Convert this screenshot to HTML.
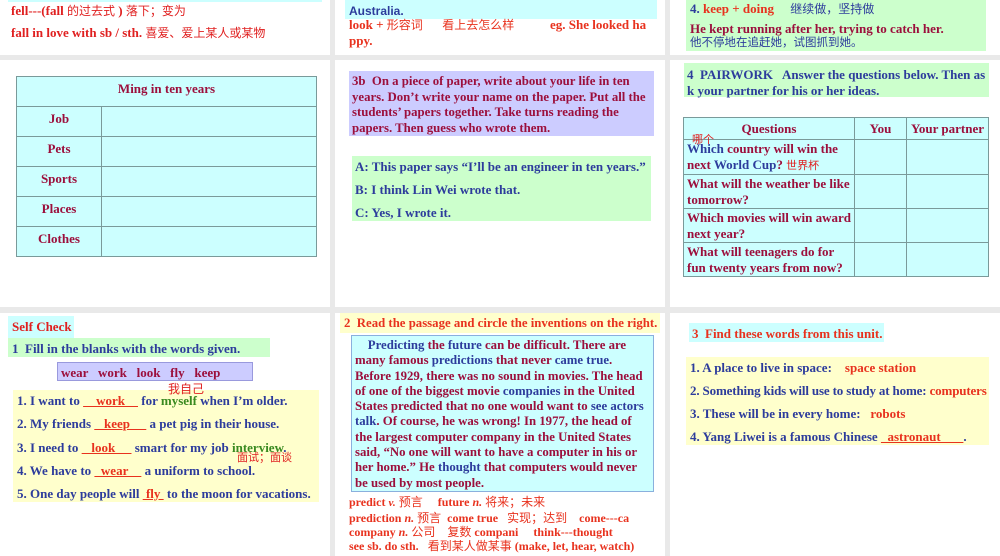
<!DOCTYPE html>
<html><head><meta charset="utf-8"><style>
*{margin:0;padding:0;box-sizing:border-box}
body{width:1000px;height:556px;background:#e9e9e9;position:relative;overflow:hidden;font-family:"Liberation Serif","Noto Serif CJK SC",serif;font-weight:bold;font-size:13px}
.p{position:absolute;background:#fff}
.a{position:absolute;white-space:nowrap;line-height:1}
.cn{font-family:"Liberation Serif","Noto Sans CJK SC",sans-serif;font-weight:normal}
.r{color:#e8321e}.m{color:#9c0f3c}.b{color:#2d3c9c}.g{color:#3a8a20}.rr{color:#e02020}
.bx{position:absolute}
table{border-collapse:collapse;position:absolute;background:#ccffff}
td{border:1px solid #7a9a9a;vertical-align:top;color:#9c0f3c;font-size:13px}
</style></head><body>
<div class="p" style="left:0;top:0;width:330px;height:55px"></div>
<div class="p" style="left:335px;top:0;width:330px;height:55px"></div>
<div class="p" style="left:670px;top:0;width:330px;height:55px"></div>
<div class="p" style="left:0;top:60px;width:330px;height:247px"></div>
<div class="p" style="left:335px;top:60px;width:330px;height:247px"></div>
<div class="p" style="left:670px;top:60px;width:330px;height:247px"></div>
<div class="p" style="left:0;top:313px;width:330px;height:243px"></div>
<div class="p" style="left:335px;top:313px;width:330px;height:243px"></div>
<div class="p" style="left:670px;top:313px;width:330px;height:243px"></div>

<!-- panel 1 -->
<div class="bx" style="left:8px;top:0;width:314px;height:2px;background:#ccffff"></div>
<div class="a rr" style="left:11px;top:4px">fell---(fall <span class="cn" style="font-size:12px">的过去式</span> ) <span class="cn" style="font-size:12px">落下；变为</span></div>
<div class="a rr" style="left:11px;top:26px">fall in love with sb / sth. <span class="cn" style="font-size:12px">喜爱、爱上某人或某物</span></div>
<table style="left:16px;top:76px;width:301px">
<tr style="height:30px"><td colspan="2" style="text-align:center;padding-top:4px">Ming in ten years</td></tr>
<tr style="height:30px"><td style="width:85px;text-align:center;padding-top:4px">Job</td><td></td></tr>
<tr style="height:30px"><td style="text-align:center;padding-top:4px">Pets</td><td></td></tr>
<tr style="height:30px"><td style="text-align:center;padding-top:4px">Sports</td><td></td></tr>
<tr style="height:30px"><td style="text-align:center;padding-top:4px">Places</td><td></td></tr>
<tr style="height:30px"><td style="text-align:center;padding-top:4px">Clothes</td><td></td></tr>
</table>

<!-- panel 2 -->
<div class="bx" style="left:345px;top:0;width:312px;height:19px;background:#ccffff"></div>
<div class="a b" style="left:349px;top:5px;font-family:'Liberation Sans',sans-serif;font-size:12px">Australia.</div>
<div class="a r" style="left:349px;top:18px">look + <span class="cn" style="font-size:12px">形容词</span> &nbsp; &nbsp; &nbsp;<span class="cn" style="font-size:12px">看上去怎么样</span> &nbsp; &nbsp; &nbsp; &nbsp; &nbsp; eg. She looked ha</div>
<div class="a r" style="left:349px;top:34px">ppy.</div>
<div class="bx" style="left:349px;top:71px;width:305px;height:65px;background:#ccccff"></div>
<div class="a m" style="left:352px;top:74px;line-height:15.5px;font-size:12.8px">3b&nbsp; On a piece of paper, write about your life in ten<br>years. Don’t write your name on the paper. Put all the<br>students’ papers together. Take turns reading the<br>papers. Then guess who wrote them.</div>
<div class="bx" style="left:352px;top:156px;width:299px;height:65px;background:#ccffcc"></div>
<div class="a b" style="left:355px;top:160px">A: This paper says “I’ll be an engineer in ten years.”</div>
<div class="a b" style="left:355px;top:183px">B: I think Lin Wei wrote that.</div>
<div class="a b" style="left:355px;top:206px">C: Yes, I wrote it.</div>

<!-- panel 3 -->
<div class="bx" style="left:686px;top:0;width:300px;height:51px;background:#ccffcc"></div>
<div class="a" style="left:690px;top:2px"><span class="b">4.</span> <span class="r">keep + doing</span> &nbsp; &nbsp; <span class="cn b" style="font-size:12px">继续做，坚持做</span></div>
<div class="a m" style="left:690px;top:22px">He kept running after her, trying to catch her.</div>
<div class="a b cn" style="left:690px;top:37px;font-size:11.5px;line-height:12px">他不停地在追赶她，试图抓到她。</div>
<div class="bx" style="left:684px;top:63px;width:305px;height:34px;background:#ccffcc"></div>
<div class="a b" style="left:687px;top:67px;line-height:15.5px">4&nbsp; PAIRWORK &nbsp; Answer the questions below. Then as<br>k your partner for his or her ideas.</div>
<table style="left:683px;top:117px;width:306px">
<tr style="height:22px"><td style="width:171px;text-align:center;padding-top:3px">Questions</td><td style="width:52px;text-align:center;padding-top:3px">You</td><td style="text-align:center;padding-top:3px">Your partner</td></tr>
<tr style="height:34px"><td style="padding:1px 0 0 3px;line-height:15.5px;position:relative"><span class="b">Which</span> country will win the<br>next <span class="b">World Cup</span>? <span class="cn rr" style="font-size:11px">世界杯</span><span class="cn rr" style="position:absolute;left:8px;top:-5px;font-size:11px;line-height:11px">哪个</span></td><td></td><td></td></tr>
<tr style="height:34px"><td style="padding:1px 0 0 3px;line-height:15.5px">What will the weather be like<br>tomorrow?</td><td></td><td></td></tr>
<tr style="height:34px"><td style="padding:1px 0 0 3px;line-height:15.5px">Which movies will win award<br>next year?</td><td></td><td></td></tr>
<tr style="height:34px"><td style="padding:1px 0 0 3px;line-height:15.5px">What will teenagers do for<br>fun twenty years from now?</td><td></td><td></td></tr>
</table>

<!-- panel 4 -->
<div class="bx" style="left:8px;top:316px;width:66px;height:24px;background:#ccffff"></div>
<div class="a rr" style="left:12px;top:320px">Self Check</div>
<div class="bx" style="left:8px;top:338px;width:262px;height:19px;background:#ccffcc"></div>
<div class="a b" style="left:12px;top:342px">1&nbsp; Fill in the blanks with the words given.</div>
<div class="bx" style="left:57px;top:362px;width:196px;height:19px;background:#ccccff;border:1px solid #9999dd"></div>
<div class="a m" style="left:61px;top:366px">wear &nbsp; work &nbsp; look &nbsp; fly &nbsp; keep</div>
<div class="bx" style="left:13px;top:390px;width:306px;height:112px;background:#ffffcc"></div>
<div class="a rr cn" style="left:168px;top:383px;font-size:12px;line-height:12px">我自己</div>
<div class="a b" style="left:17px;top:394px">1. I want to <span style="text-decoration:underline;color:#e8321e">&nbsp;&nbsp;&nbsp;&nbsp;work&nbsp;&nbsp;&nbsp;&nbsp;</span> for <span class="g">myself</span> when I’m older.</div>
<div class="a b" style="left:17px;top:417px">2. My friends <span style="text-decoration:underline;color:#e8321e">&nbsp;&nbsp;&nbsp;keep&nbsp;&nbsp;&nbsp;&nbsp;&nbsp;</span> a pet pig in their house.</div>
<div class="a b" style="left:17px;top:441px">3. I need to <span style="text-decoration:underline;color:#e8321e">&nbsp;&nbsp;&nbsp;look&nbsp;&nbsp;&nbsp;&nbsp;&nbsp;</span> smart for my job <span class="g">interview</span>.</div>
<div class="a rr cn" style="left:237px;top:453px;font-size:11px;line-height:11px">面试；面谈</div>
<div class="a b" style="left:17px;top:464px">4. We have to <span style="text-decoration:underline;color:#e8321e">&nbsp;&nbsp;wear&nbsp;&nbsp;&nbsp;&nbsp;</span> a uniform to school.</div>
<div class="a b" style="left:17px;top:487px">5. One day people will <span style="text-decoration:underline;color:#e8321e">&nbsp;fly&nbsp;</span> to the moon for vacations.</div>

<!-- panel 5 -->
<div class="bx" style="left:340px;top:313px;width:320px;height:20px;background:#ffffcc"></div>
<div class="a r" style="left:344px;top:317px;font-size:12.8px">2&nbsp; Read the passage and circle the inventions on the right.</div>
<div class="bx" style="left:351px;top:335px;width:303px;height:157px;background:#ccffff;border:1px solid #8ab0dd"></div>
<div class="a m" style="left:355px;top:338px;line-height:15.3px;font-size:12.8px">&nbsp;&nbsp;&nbsp;&nbsp;<span class="b">Predicting</span> the <span class="b">future</span> can be difficult. There are<br>many famous <span class="b">predictions</span> that never <span class="b">came true</span>.<br>Before 1929, there was no sound in movies. The head<br>of one of the biggest movie <span class="b">companies</span> in the United<br>States predicted that no one would want to <span class="b">see actors</span><br><span class="b">talk</span>. Of course, he was wrong! In 1977, the head of<br>the largest computer company in the United States<br>said, “No one will want to have a computer in his or<br>her home.” He <span class="b">thought</span> that computers would never<br>be used by most people.</div>
<div class="a r" style="left:349px;top:496px;font-size:12px">predict <i style="font-size:11px">v.</i> <span class="cn">预言</span> &nbsp; &nbsp; future <i>n.</i> <span class="cn">将来；未来</span></div>
<div class="a r" style="left:349px;top:512px;font-size:12px">prediction <i>n.</i> <span class="cn">预言</span>&nbsp; come true &nbsp; <span class="cn">实现；达到</span> &nbsp; &nbsp;come---ca</div>
<div class="a r" style="left:349px;top:526px;font-size:12px">company <i>n.</i> <span class="cn">公司</span> &nbsp; &nbsp;<span class="cn">复数</span> compani &nbsp; &nbsp; think---thought</div>
<div class="a r" style="left:349px;top:540px;font-size:12px">see sb. do sth. &nbsp; <span class="cn">看到某人做某事</span> (make, let, hear, watch)</div>

<!-- panel 6 -->
<div class="bx" style="left:689px;top:323px;width:195px;height:19px;background:#ccffff"></div>
<div class="a r" style="left:692px;top:327px">3&nbsp; Find these words from this unit.</div>
<div class="bx" style="left:686px;top:357px;width:303px;height:88px;background:#ffffcc"></div>
<div class="a b" style="left:690px;top:361px">1. A place to live in space: &nbsp; &nbsp;<span class="r">space station</span></div>
<div class="a b" style="left:690px;top:384px;letter-spacing:-0.15px">2. Something kids will use to study at home: <span class="r">computers</span></div>
<div class="a b" style="left:690px;top:407px">3. These will be in every home: &nbsp; <span class="r">robots</span></div>
<div class="a b" style="left:690px;top:430px">4. Yang Liwei is a famous Chinese <span style="text-decoration:underline;color:#e8321e">&nbsp;&nbsp;astronaut&nbsp;&nbsp;&nbsp;&nbsp;&nbsp;&nbsp;&nbsp;</span>.</div>
</body></html>
